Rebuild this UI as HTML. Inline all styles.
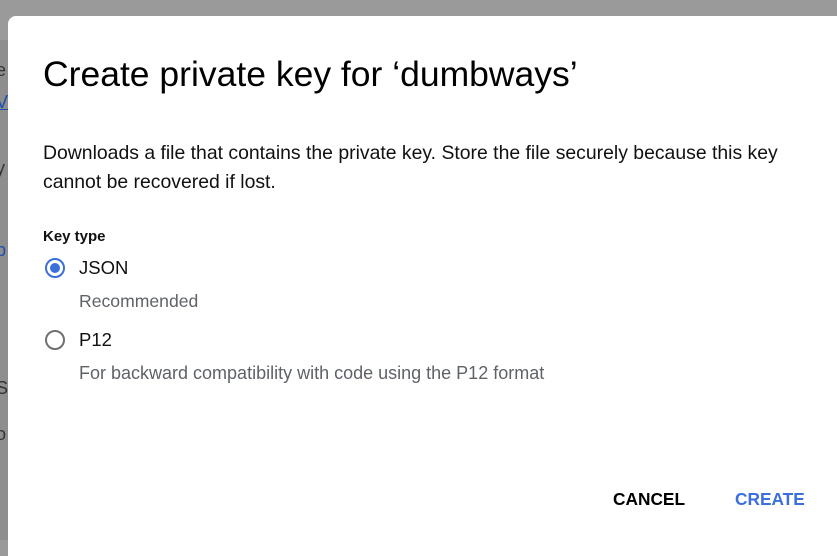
<!DOCTYPE html>
<html><head><meta charset="utf-8"><style>
html,body{margin:0;padding:0;width:837px;height:540px;overflow:hidden;background:#9a9a9a;font-family:"Liberation Sans",Arial,sans-serif;}
.bg{position:absolute;left:0;top:40px;width:8px;height:500px;background:#8e8e8e;}
.bgtxt{position:absolute;left:0;font-size:18px;color:#222;}
.dlg{position:absolute;left:8px;top:16px;width:840px;height:540px;background:#fff;border-radius:8px 0 0 0;}
.t{position:absolute;color:#111;white-space:nowrap;}
.radio{position:absolute;width:20px;height:20px;border-radius:50%;box-sizing:border-box;}
</style></head><body>
<div class="bg"></div>
<div class="bgtxt" style="top:60px;left:-4px;color:#333">e</div>
<div class="bgtxt" style="top:92px;left:-4px;color:#1a4fb0;text-decoration:underline">V</div>
<div class="bgtxt" style="top:158px;left:-4px;color:#333">y</div>
<div class="bgtxt" style="top:240px;left:-4px;color:#1a4fb0">b</div>
<div class="bgtxt" style="top:378px;left:-4px;color:#333">S</div>
<div class="bgtxt" style="top:424px;left:-4px;color:#333">o</div>
<div class="dlg">
<div class="t" style="left:35px;top:38px;font-size:35.5px;color:#000;">Create private key for ‘dumbways’</div>
<div class="t" style="left:35px;top:123px;font-size:19.4px;line-height:29px;">Downloads a file that contains the private key. Store the file securely because this key<br>cannot be recovered if lost.</div>
<div class="t" style="left:35px;top:212px;font-size:15px;font-weight:bold;">Key type</div>
<div class="radio" style="left:37px;top:242px;border:2px solid #3b6fdb;"><div style="position:absolute;left:3px;top:3px;width:10px;height:10px;border-radius:50%;background:#3b6fdb"></div></div>
<div class="t" style="left:71px;top:241px;font-size:18.5px;">JSON</div>
<div class="t" style="left:71px;top:275px;font-size:17.6px;color:#5f6368;">Recommended</div>
<div class="radio" style="left:37px;top:314px;border:2px solid #707070;"></div>
<div class="t" style="left:71px;top:313px;font-size:18.5px;">P12</div>
<div class="t" style="left:71px;top:347px;font-size:18px;color:#5f6368;">For backward compatibility with code using the P12 format</div>
<div class="t" style="left:605px;top:473px;font-size:17.3px;font-weight:bold;color:#000;">CANCEL</div>
<div class="t" style="left:727px;top:473px;font-size:17.3px;font-weight:bold;color:#3b6fdb;">CREATE</div>
</div>
</body></html>
